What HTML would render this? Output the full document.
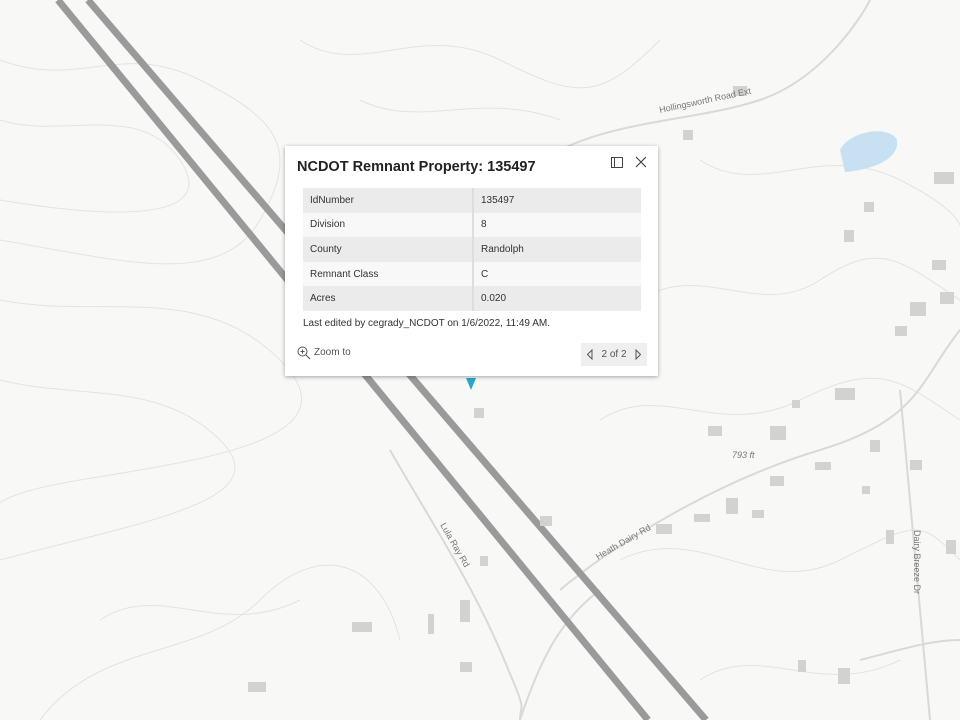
<!DOCTYPE html>
<html><head><style>
body{margin:0;width:960px;height:720px;overflow:hidden;background:#f8f8f6;font-family:"Liberation Sans",sans-serif;position:relative}
svg{position:absolute;left:0;top:0}
.pop{position:absolute;left:285px;top:146px;width:373px;height:230px;background:#fff;box-shadow:0 1px 4px rgba(0,0,0,.35)}
.t{position:absolute;left:12px;top:13px;font-size:14.5px;font-weight:bold;color:#222}
table{position:absolute;left:18px;top:42px;width:338px;border-collapse:collapse;font-size:10px;color:#333}
td{height:24.6px;padding:0 0 0 7px}
tr:nth-child(odd){background:#ebebeb}
tr:nth-child(even){background:#f8f8f8}
td:first-child{width:162px;border-right:2px solid #ddd}
.ed{position:absolute;left:18px;top:172px;font-size:10px;color:#333}
.zm{position:absolute;left:13px;top:201px;font-size:10px;color:#555}
.pg{position:absolute;left:296px;top:197px;width:66px;height:23px;background:#efefef;font-size:10px;color:#555;line-height:23px;text-align:center}
</style></head><body>
<svg width="960" height="720">
<g fill="none" stroke="#e6e3de" stroke-width="1">
<path d="M0 60 C80 90 120 40 200 80 S300 150 260 220 S120 260 0 240"/>
<path d="M0 120 C60 140 140 100 180 160 S120 220 0 200"/>
<path d="M0 300 C100 320 200 280 280 360 S200 460 80 480 S0 520 0 520"/>
<path d="M0 380 C80 400 160 380 220 440 S150 520 0 560"/>
<path d="M40 720 C100 640 200 660 260 600 S380 560 400 640"/>
<path d="M700 160 C760 200 820 140 900 180 S960 240 960 240"/>
<path d="M640 300 C700 260 760 320 820 280 S900 260 960 300"/>
<path d="M600 420 C660 380 720 440 800 400 S900 380 960 420"/>
<path d="M620 560 C700 520 760 600 840 560 S920 520 960 560"/>
<path d="M700 680 C760 640 820 700 900 660"/>
<path d="M300 40 C360 80 420 20 500 60 S600 100 660 40"/>
<path d="M360 100 C420 130 480 90 560 120"/>
<path d="M100 620 C160 580 220 640 300 600"/>
</g>
<g fill="none" stroke="#d9d9d7" stroke-width="2">
<path d="M560 150 C620 120 700 120 760 100 S860 20 870 0"/>
<path d="M560 590 C620 540 720 480 820 450 S920 380 960 330"/>
<path d="M900 390 L930 720"/>
<path d="M390 450 C430 520 470 580 500 650 S520 700 520 720"/>
<path d="M860 660 C900 650 930 640 960 640"/>
<path d="M520 720 C540 660 560 620 600 590"/>
</g>
<g stroke="#9a9a9a" stroke-width="7">
<line x1="58" y1="0" x2="648" y2="720"/>
<line x1="88" y1="0" x2="706" y2="720"/>
</g>
<path d="M840 150 C850 130 890 125 897 140 C900 160 870 170 845 172 Z" fill="#c7e1f3"/>
<g fill="#d2d2d0">
<rect x="733" y="86" width="14" height="10"/><rect x="683" y="130" width="10" height="10"/>
<rect x="934" y="172" width="20" height="12"/><rect x="864" y="202" width="10" height="10"/>
<rect x="844" y="230" width="10" height="12"/><rect x="932" y="260" width="14" height="10"/>
<rect x="910" y="302" width="16" height="14"/><rect x="940" y="292" width="14" height="12"/>
<rect x="895" y="326" width="12" height="10"/><rect x="835" y="388" width="20" height="12"/>
<rect x="708" y="426" width="14" height="10"/><rect x="770" y="426" width="16" height="14"/>
<rect x="870" y="440" width="10" height="12"/><rect x="910" y="460" width="12" height="10"/>
<rect x="815" y="462" width="16" height="8"/><rect x="770" y="476" width="14" height="10"/>
<rect x="726" y="498" width="12" height="16"/><rect x="656" y="524" width="16" height="10"/>
<rect x="540" y="516" width="12" height="10"/><rect x="474" y="408" width="10" height="10"/>
<rect x="460" y="600" width="10" height="22"/><rect x="352" y="622" width="20" height="10"/>
<rect x="428" y="614" width="6" height="20"/><rect x="460" y="662" width="12" height="10"/>
<rect x="248" y="682" width="18" height="10"/><rect x="798" y="660" width="8" height="12"/>
<rect x="838" y="668" width="12" height="16"/><rect x="886" y="530" width="8" height="14"/>
<rect x="946" y="540" width="10" height="14"/><rect x="480" y="556" width="8" height="10"/>
<rect x="752" y="510" width="12" height="8"/><rect x="694" y="514" width="16" height="8"/>
<rect x="862" y="486" width="8" height="8"/><rect x="792" y="400" width="8" height="8"/>
</g>
<g font-family="Liberation Sans" font-size="9" fill="#777">
<text x="660" y="113" transform="rotate(-12 660 113)">Hollingsworth Road Ext</text>
<text x="732" y="458" font-style="italic">793 ft</text>
<text x="598" y="560" transform="rotate(-30 598 560)">Heath Dairy Rd</text>
<text x="440" y="525" transform="rotate(60 440 525)">Lula Ray Rd</text>
<text x="914" y="530" transform="rotate(90 914 530)">Dairy Breeze Dr</text>
</g>
<path d="M466 378 L471 390 L476 378 Z" fill="#26a9c9"/>
</svg>
<div class="pop">
<div class="t">NCDOT Remnant Property: 135497</div>
<svg style="left:326px;top:11px" width="12" height="11"><rect x="0.5" y="0.5" width="11" height="10" fill="none" stroke="#444"/><line x1="3.5" y1="0" x2="3.5" y2="11" stroke="#444"/></svg>
<svg style="left:350px;top:10px" width="12" height="12"><path d="M1 1L11 11M11 1L1 11" stroke="#444" stroke-width="1.2"/></svg>
<table>
<tr><td>IdNumber</td><td>135497</td></tr>
<tr><td>Division</td><td>8</td></tr>
<tr><td>County</td><td>Randolph</td></tr>
<tr><td>Remnant Class</td><td>C</td></tr>
<tr><td>Acres</td><td>0.020</td></tr>
</table>
<div class="ed">Last edited by cegrady_NCDOT on 1/6/2022, 11:49 AM.</div>
<svg style="left:12px;top:200px" width="14" height="14"><circle cx="5.5" cy="5.5" r="4.5" fill="none" stroke="#555"/><path d="M9 9L13 13M3.5 5.5h4M5.5 3.5v4" stroke="#555"/></svg>
<div class="zm" style="left:29px">Zoom to</div>
<div class="pg">2 of 2</div>
<svg style="left:301px;top:203px" width="8" height="11"><path d="M6 1L1.5 5.5L6 10Z" fill="none" stroke="#555"/></svg>
<svg style="left:349px;top:203px" width="8" height="11"><path d="M2 1L6.5 5.5L2 10Z" fill="none" stroke="#555"/></svg>
</div>
</body></html>
